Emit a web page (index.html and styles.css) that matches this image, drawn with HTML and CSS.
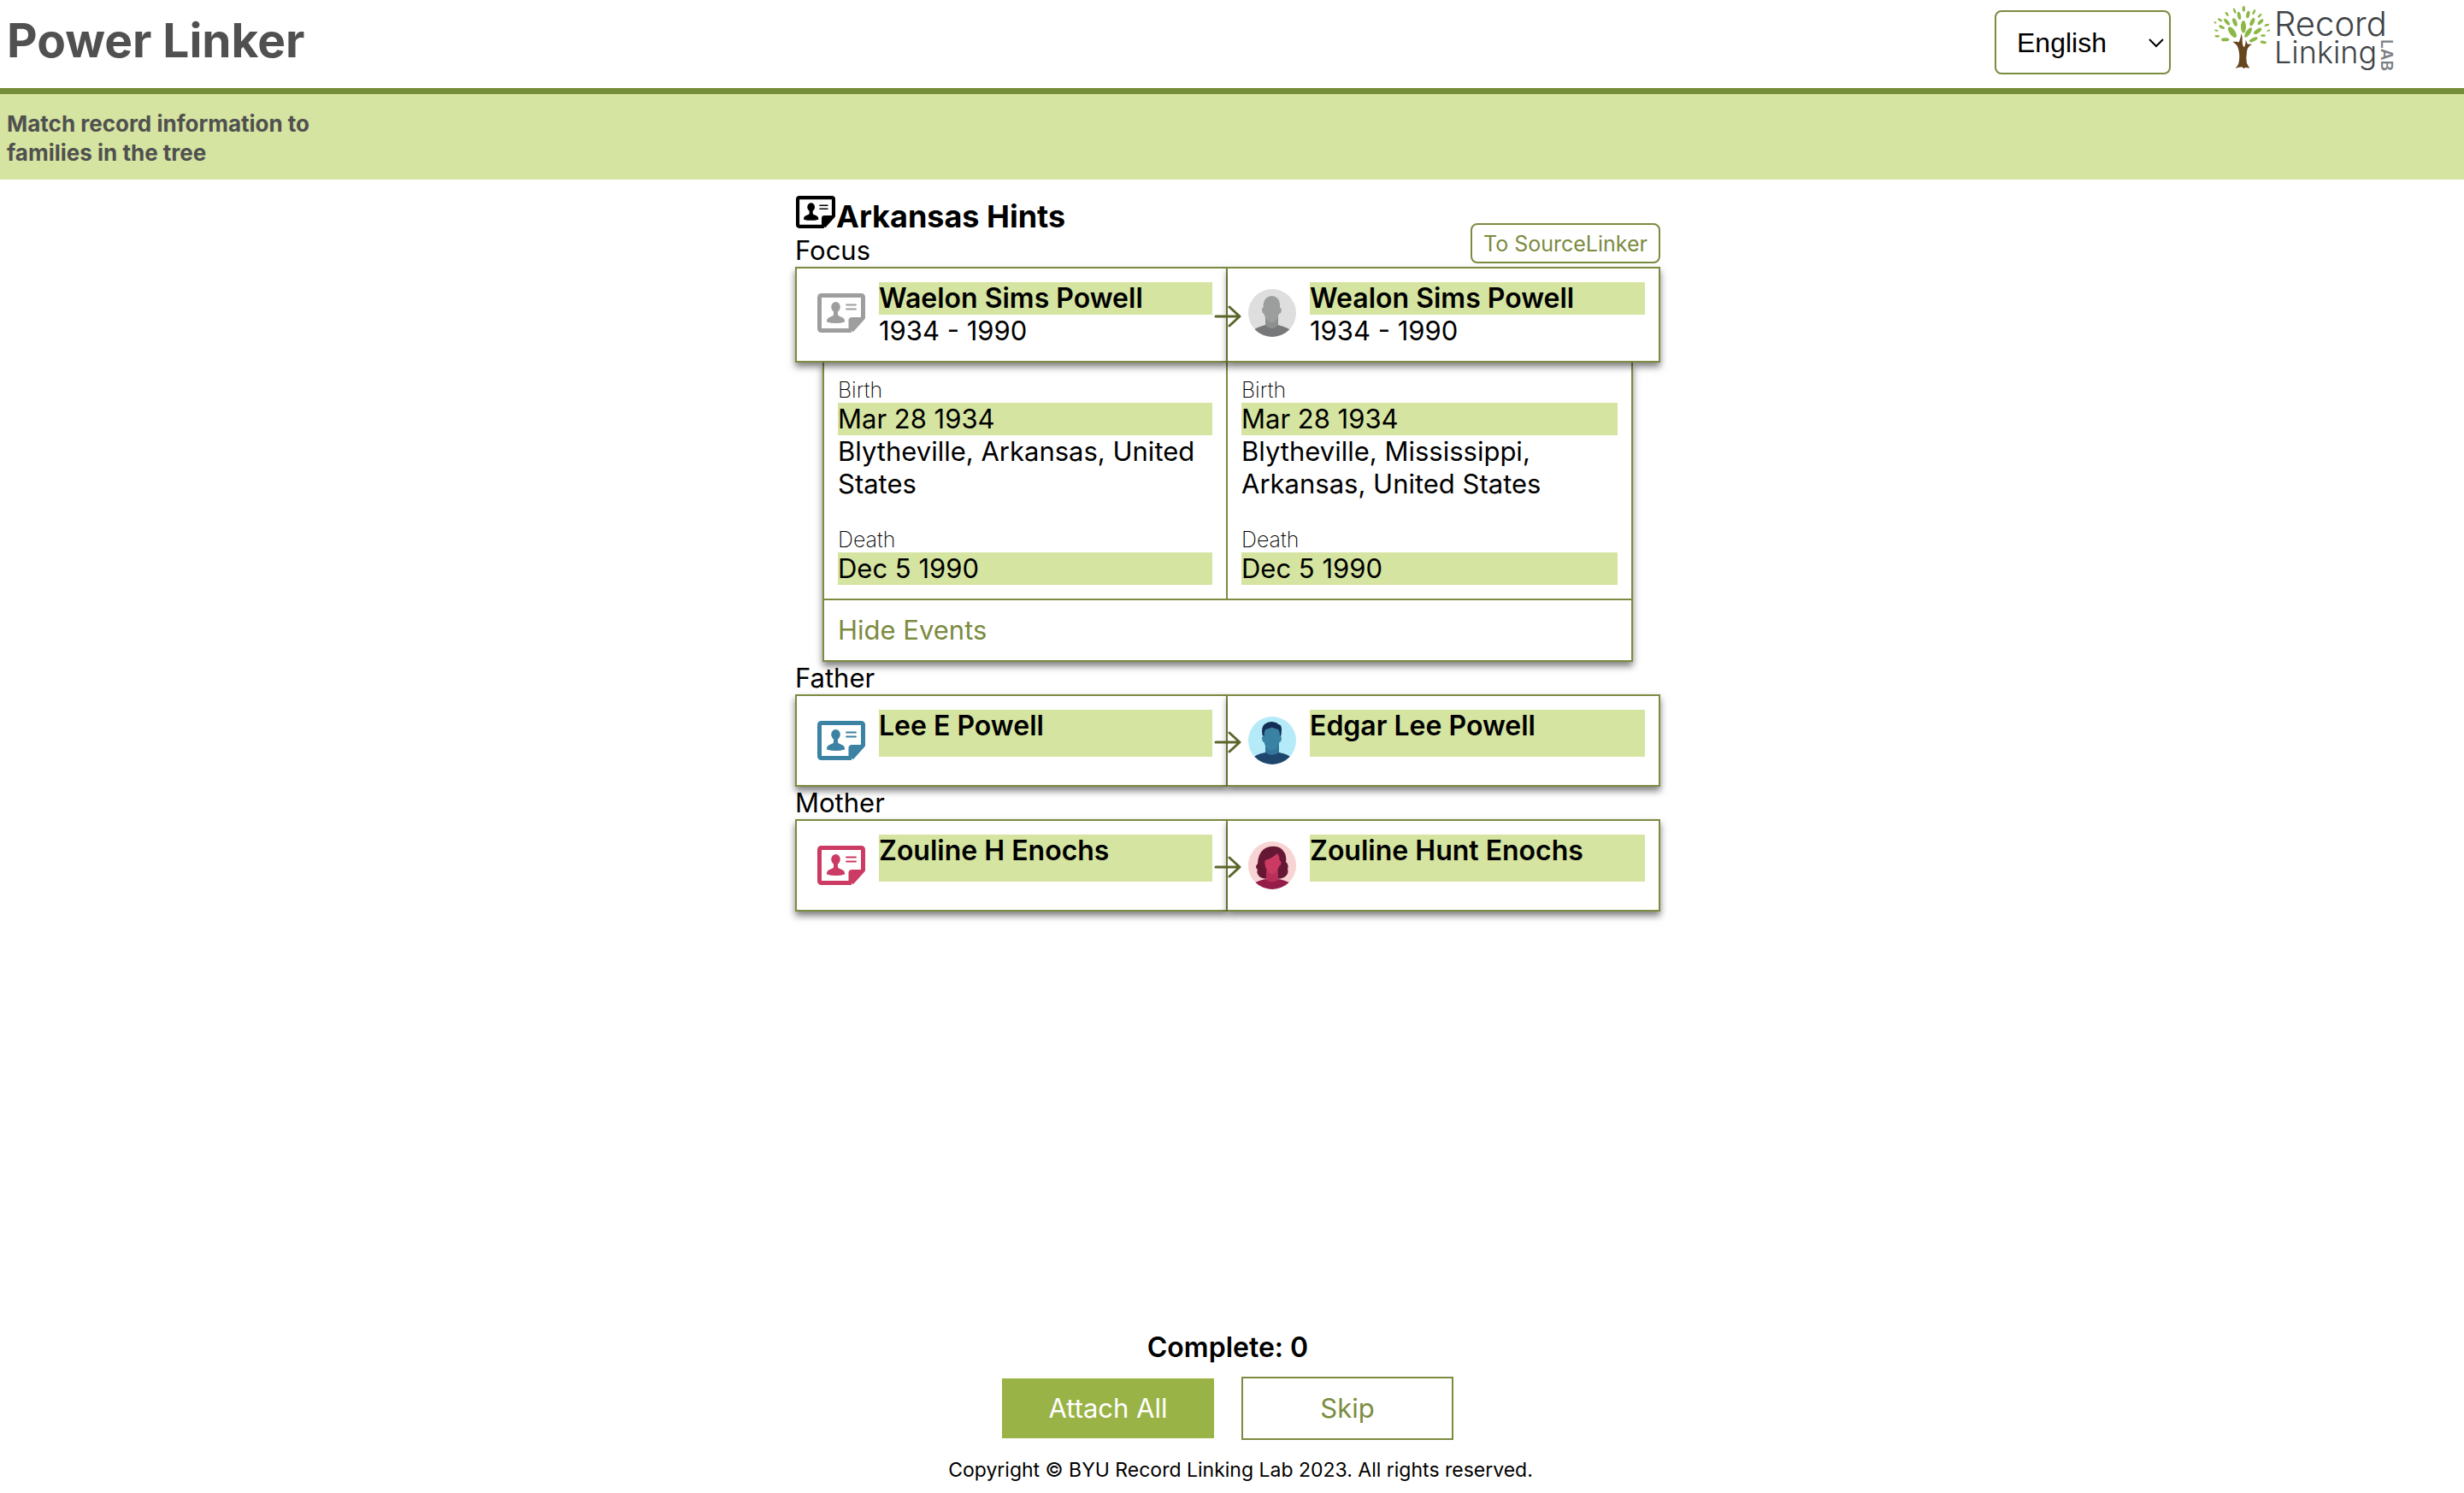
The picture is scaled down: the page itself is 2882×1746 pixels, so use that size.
FILE: index.html
```html
<!DOCTYPE html>
<html lang="en">
<head>
<meta charset="utf-8">
<meta name="viewport" content="width=device-width, initial-scale=1">
<title>Power Linker</title>
<link rel="stylesheet" href="styles.css">
</head>
<body>
<svg class="sprite" aria-hidden="true">
  <symbol id="record" viewBox="0 0 56 46">
    <path fill="none" stroke="currentColor" stroke-width="5" stroke-linejoin="round" d="M40 43.500H5Q2.500 43.500 2.500 41V5Q2.500 2.500 5 2.500H51Q53.500 2.500 53.500 5V28.500L40 43.500"/>
    <path fill="currentColor" d="M36.500 43V32Q36.500 28 40.500 28H54L40 44Z"/>
    <ellipse fill="currentColor" cx="21.500" cy="16" rx="5.300" ry="6"/>
    <path fill="currentColor" d="M19 20H24V25Q24 26.500 27 27.300Q32 28.800 32 32.500V33.500Q27 35 21.500 35T11 33.500V32.500Q11 28.800 16 27.300Q19 26.500 19 25Z"/>
    <path stroke="currentColor" stroke-width="1.800" stroke-linecap="round" d="M34 13.500H45M34 18.500H45"/>
  </symbol>
  <symbol id="arrow" viewBox="0 0 32 28">
    <path fill="none" stroke="currentColor" stroke-width="3" stroke-linecap="round" stroke-linejoin="round" d="M2 14H30M18 3L30 14L18 25"/>
  </symbol>
  <clipPath id="round"><circle cx="28" cy="28" r="28"/></clipPath>
</svg>

<header class="topbar">
  <h1 class="title">Power Linker</h1>
  <div class="topbar-tools">
    <div class="language">
      <select class="language-select" aria-label="Language">
        <option>English</option>
      </select>
      <svg class="chevron" viewBox="0 0 18 11" aria-hidden="true"><path fill="none" stroke="#000" stroke-width="2" d="M1 1L9 9L17 1"/></svg>
    </div>
    <svg class="logo" viewBox="0 0 250 90" role="img" aria-label="Record Linking Lab">
      <g transform="scale(.33333)">
        <g fill="#8cb845">
          <ellipse cx="163" cy="31" rx="5" ry="10"/>
          <ellipse cx="131" cy="38" rx="4" ry="10" transform="rotate(-20 131 38)"/>
          <ellipse cx="199" cy="42" rx="4" ry="10" transform="rotate(25 199 42)"/>
          <ellipse cx="104" cy="49" rx="4" ry="9" transform="rotate(-35 104 49)"/>
          <ellipse cx="147" cy="55" rx="6" ry="14" transform="rotate(-12 147 55)"/>
          <ellipse cx="178" cy="51" rx="6" ry="13" transform="rotate(12 178 51)"/>
          <ellipse cx="219" cy="55" rx="4" ry="9" transform="rotate(45 219 55)"/>
          <ellipse cx="80" cy="70" rx="4" ry="9" transform="rotate(-60 80 70)"/>
          <ellipse cx="104" cy="77" rx="6" ry="14" transform="rotate(-40 104 77)"/>
          <ellipse cx="132" cy="78" rx="7" ry="15" transform="rotate(-22 132 78)"/>
          <ellipse cx="162" cy="94" rx="9" ry="22"/>
          <ellipse cx="193" cy="77" rx="7" ry="15" transform="rotate(24 193 77)"/>
          <ellipse cx="222" cy="77" rx="6" ry="13" transform="rotate(45 222 77)"/>
          <ellipse cx="244" cy="88" rx="4" ry="9" transform="rotate(72 244 88)"/>
          <ellipse cx="63" cy="79" rx="3" ry="5" transform="rotate(-60 63 79)"/>
          <ellipse cx="86" cy="95" rx="5" ry="11" transform="rotate(-65 86 95)"/>
          <ellipse cx="123" cy="113" rx="10" ry="22" transform="rotate(-35 123 113)"/>
          <ellipse cx="67" cy="107" rx="3" ry="7" transform="rotate(-80 67 107)"/>
          <ellipse cx="179" cy="114" rx="8" ry="20" transform="rotate(35 179 114)"/>
          <ellipse cx="212" cy="109" rx="7" ry="16" transform="rotate(55 212 109)"/>
          <ellipse cx="250" cy="107" rx="3" ry="6" transform="rotate(70 250 107)"/>
          <ellipse cx="70" cy="127" rx="4" ry="9" transform="rotate(-90 70 127)"/>
          <ellipse cx="98" cy="139" rx="6" ry="14" transform="rotate(-92 98 139)"/>
          <ellipse cx="197" cy="139" rx="6" ry="16" transform="rotate(65 197 139)"/>
          <ellipse cx="231" cy="125" rx="4" ry="9" transform="rotate(90 231 125)"/>
          <ellipse cx="232" cy="148" rx="5" ry="11" transform="rotate(100 232 148)"/>
        </g>
        <path fill="#66461f" d="M155 117Q159 130 158 142Q158 160 164 166Q170 158 170 140L177 155Q183 154 192 156Q176 162 174 182Q170 205 174 222Q178 231 184 239Q172 236 168 237L164 241Q160 236 156 235Q146 235 133 240Q145 230 147 212Q150 188 143 168Q140 156 124 146L140 146Q145 150 147 146Q153 132 155 117Z"/>
      </g>
      <text class="logo-record" x="90" y="42">Record</text>
      <text class="logo-linking" x="90" y="74">Linking</text>
      <text class="logo-lab" transform="translate(215 46) rotate(90)" x="0" y="0">LAB</text>
    </svg>
  </div>
</header>

<div class="banner">
  <p class="banner-text">Match record information to families in the tree</p>
</div>

<main class="main">
  <section class="hints">
    <div class="hints-head">
      <h2 class="hints-title"><svg class="hints-icon" aria-hidden="true"><use href="#record"/></svg>Arkansas Hints</h2>
      <button class="source-button" type="button">To SourceLinker</button>
    </div>

    <h3 class="role">Focus</h3>
    <div class="match">
      <div class="person">
        <div class="figure neutral"><svg class="record-icon" aria-hidden="true"><use href="#record"/></svg></div>
        <div class="info"><p class="name">Waelon Sims Powell</p><p>1934 - 1990</p></div>
      </div>
      <div class="person">
        <div class="figure">
          <svg class="avatar" viewBox="0 0 56 56" aria-hidden="true">
            <g clip-path="url(#round)">
              <path fill="#dedede" d="M0 0H56V56H0Z"/>
              <path fill="#8e9090" d="M20 32H35V48H20Z"/>
              <path fill="#9c9e9d" d="M27.500 8Q38 9 37 22Q39.500 22 38.500 27Q37.500 29 36 29Q35 34 31 38Q27 40 24 38Q19 34 18.500 29Q17 29 16.500 27Q15 22 17.500 22Q17 9 27.500 8Z"/>
              <path fill="#77787a" d="M4 56V50Q8 45 20 42Q27.500 50 35 42Q47 45 52 50V56Z"/>
            </g>
          </svg>
        </div>
        <div class="info"><p class="name">Wealon Sims Powell</p><p>1934 - 1990</p></div>
      </div>
      <svg class="match-arrow" aria-hidden="true"><use href="#arrow"/></svg>
    </div>
    <div class="events">
      <div class="events-grid">
        <div class="events-cell">
          <div class="event"><h4 class="event-type">Birth</h4><p class="same">Mar 28 1934</p><p>Blytheville, Arkansas, United States</p></div>
          <div class="event"><h4 class="event-type">Death</h4><p class="same">Dec 5 1990</p></div>
        </div>
        <div class="events-cell">
          <div class="event"><h4 class="event-type">Birth</h4><p class="same">Mar 28 1934</p><p>Blytheville, Mississippi, Arkansas, United States</p></div>
          <div class="event"><h4 class="event-type">Death</h4><p class="same">Dec 5 1990</p></div>
        </div>
      </div>
      <button class="events-toggle" type="button">Hide Events</button>
    </div>

    <h3 class="role">Father</h3>
    <div class="match">
      <div class="person">
        <div class="figure male"><svg class="record-icon" aria-hidden="true"><use href="#record"/></svg></div>
        <div class="info"><p class="name name-only">Lee E Powell</p></div>
      </div>
      <div class="person">
        <div class="figure">
          <svg class="avatar" viewBox="0 0 56 56" aria-hidden="true">
            <g clip-path="url(#round)">
              <path fill="#b5ebf8" d="M0 0H56V56H0Z"/>
              <path fill="#31759a" d="M20 32H36V48H20Z"/>
              <path fill="#3a82a3" d="M18 14H37V23Q40 23 38.500 28Q38 30 36.500 30Q35 36 31 39Q27 40 24 39Q20 36 18.500 30Q17 30 16.500 28Q15 23 18 23Z"/>
              <path fill="#122e54" d="M18.500 23L16.500 22Q15 12 19 9Q25 4 32 7Q34 7 35 9Q39 9 39 15Q39 20 38 23H37Q37 17 35 15Q28 12 20 15Q18.500 18 18.500 23Z"/>
              <path fill="#1f466c" d="M4 56V50Q8 44 20 42Q28 48 36 42Q48 44 52 50V56Z"/>
            </g>
          </svg>
        </div>
        <div class="info"><p class="name name-only">Edgar Lee Powell</p></div>
      </div>
      <svg class="match-arrow" aria-hidden="true"><use href="#arrow"/></svg>
    </div>

    <h3 class="role">Mother</h3>
    <div class="match">
      <div class="person">
        <div class="figure female"><svg class="record-icon" aria-hidden="true"><use href="#record"/></svg></div>
        <div class="info"><p class="name name-only">Zouline H Enochs</p></div>
      </div>
      <div class="person">
        <div class="figure">
          <svg class="avatar" viewBox="0 0 56 56" aria-hidden="true">
            <g clip-path="url(#round)">
              <path fill="#f8d3d3" d="M0 0H56V56H0Z"/>
              <path fill="#651733" d="M26 6Q38 4 43 14Q45 19 44 24Q48 27 46 32Q48 38 42 42Q37 45 28 43Q18 45 13 41Q9 37 11 33Q7 30 11 26Q11 21 13 16Q17 7 26 6Z"/>
              <path fill="#b8305a" d="M21 34H35V50H21Z"/>
              <path fill="#cc3a63" d="M20 22Q29 19 34 14Q37 17 36.500 22Q39.500 23 38 27Q37.500 29 36 29Q35 34 31 37Q28 39 25 37Q20 33 19.500 27Q19 24 20 22Z"/>
              <path fill="#941d49" d="M4 56V51Q8 47 20 44Q28 51 36 44Q48 47 52 51V56Z"/>
            </g>
          </svg>
        </div>
        <div class="info"><p class="name name-only">Zouline Hunt Enochs</p></div>
      </div>
      <svg class="match-arrow" aria-hidden="true"><use href="#arrow"/></svg>
    </div>
  </section>

  <section class="actions">
    <p class="complete">Complete: 0</p>
    <div class="action-row">
      <button class="action attach" type="button">Attach All</button>
      <button class="action skip" type="button">Skip</button>
    </div>
  </section>
</main>

<footer class="copyright">Copyright © BYU Record Linking Lab 2023. All rights reserved.</footer>
</body>
</html>
```
FILE: styles.css
```css
:root {
  --olive: #7b8b40;
  --leaf: #d5e4a0;
  --line: 38px;
}

* {
  box-sizing: border-box;
}

body {
  margin: 0;
  min-height: 100vh;
  display: flex;
  flex-direction: column;
  background: #fff;
  color: #000;
  font-family: Inter, "Noto Sans", sans-serif;
  font-size: 31px;
  line-height: var(--line);
}

h1, h2, h3, h4, p {
  margin: 0;
}

button, select {
  font-family: inherit;
  line-height: inherit;
  margin: 0;
}

.sprite {
  position: absolute;
  width: 0;
  height: 0;
}

.topbar {
  display: flex;
  align-items: flex-start;
  justify-content: space-between;
  height: 110px;
  padding: 0 62px 0 8px;
  border-bottom: 7px solid #758c38;
}

.title {
  padding-top: 13px;
  font-size: 55px;
  line-height: 68px;
  font-weight: 700;
  color: #505050;
}

.topbar-tools {
  display: flex;
  align-items: flex-start;
  gap: 31px;
}

.language {
  position: relative;
  margin-top: 12px;
}

.language-select {
  appearance: none;
  display: block;
  width: 206px;
  height: 75px;
  padding: 0 24px;
  border: 2px solid var(--olive);
  border-radius: 8px;
  background: #fff;
  color: #000;
  font-family: "Liberation Sans", Arial, sans-serif;
  font-size: 32px;
}

.chevron {
  position: absolute;
  right: 8px;
  top: 33px;
  width: 18px;
  height: 11px;
  pointer-events: none;
}

.logo {
  width: 250px;
  height: 90px;
}

.logo-record,
.logo-linking {
  font-size: 40px;
  font-weight: 300;
  fill: #3f4447;
}

.logo-linking {
  font-size: 36px;
}

.logo-lab {
  font-size: 19px;
  font-weight: 600;
  fill: #7c7f82;
}

.banner {
  padding: 18px 8px 14px;
  background: var(--leaf);
  color: #505050;
}

.banner-text {
  max-width: 400px;
  font-size: 26px;
  line-height: 34px;
  font-weight: 700;
}

.main {
  flex: 1;
  display: flex;
  flex-direction: column;
  align-items: center;
  justify-content: space-between;
  padding: 16px 10px 0 0;
}

.hints {
  width: 100%;
  max-width: 1012px;
}

.hints-head {
  display: flex;
  justify-content: space-between;
  align-items: flex-start;
  height: 48px;
}

.hints-title {
  display: flex;
  align-items: flex-start;
  font-size: 36px;
  line-height: 54px;
  font-weight: 700;
}

.hints-icon {
  width: 46px;
  height: 38px;
  margin: 3px 1px 0;
}

.source-button {
  margin-top: 35px;
  width: 222px;
  height: 47px;
  flex: none;
  padding: 0;
  border: 2px solid var(--olive);
  border-radius: 8px;
  background: #fff;
  color: var(--olive);
  font-size: 25px;
}

.role {
  font-size: 31px;
  font-weight: 400;
}

.match {
  position: relative;
  z-index: 1;
  display: grid;
  grid-template-columns: 1fr 1fr;
}

.person {
  display: flex;
  align-items: flex-start;
  gap: 8px;
  padding: 16px;
  border: 2px solid var(--olive);
  background: #fff;
  box-shadow: 0 5px 8px rgba(0, 0, 0, .5);
}

.person + .person {
  border-left: 0;
}

.figure {
  flex: none;
  display: grid;
  place-items: center;
  width: 72px;
  height: 72px;
}

.neutral { color: #9e9e9e; }
.male { color: #3b82a3; }
.female { color: #cb3b64; }

.record-icon {
  width: 56px;
  height: 46px;
}

.avatar {
  width: 56px;
  height: 56px;
}

.info {
  flex: 1;
}

.name {
  background: var(--leaf);
  font-size: 32px;
  font-weight: 600;
}

.name-only {
  min-height: 55px;
}

.match-arrow {
  position: absolute;
  left: 50%;
  top: 50%;
  width: 32px;
  height: 28px;
  margin: -12px 0 0 -16px;
  color: #5b672a;
}

.events {
  margin: 0 32px;
  border: 2px solid var(--olive);
  border-top: 0;
  background: #fff;
  box-shadow: 0 5px 8px rgba(0, 0, 0, .5);
}

.events-grid {
  display: grid;
  grid-template-columns: 1fr 1fr;
  border-bottom: 2px solid var(--olive);
}

.events-cell {
  display: flex;
  flex-direction: column;
  gap: 32px;
  padding: 18px 16px 16px;
}

.events-cell:first-child {
  border-right: 2px solid var(--olive);
}

.event-type {
  font-size: 25px;
  line-height: 29px;
  font-weight: 200;
}

.same {
  background: var(--leaf);
}

.events-toggle {
  display: block;
  width: 100%;
  padding: 16px;
  border: 0;
  background: none;
  color: var(--olive);
  font-size: 31px;
  text-align: left;
}

.actions {
  display: flex;
  flex-direction: column;
  align-items: center;
  gap: 15px;
}

.complete {
  font-size: 32px;
  font-weight: 600;
}

.action-row {
  display: flex;
  align-items: center;
  gap: 32px;
}

.action {
  width: 248px;
  padding: 16px;
  font-size: 31px;
}

.attach {
  border: 0;
  background: #9ab347;
  color: #fff;
}

.skip {
  border: 2px solid var(--olive);
  background: #fff;
  color: var(--olive);
}

.copyright {
  padding: 20px 0 12px 20px;
  font-size: 23px;
  line-height: 30px;
  text-align: center;
}
```
